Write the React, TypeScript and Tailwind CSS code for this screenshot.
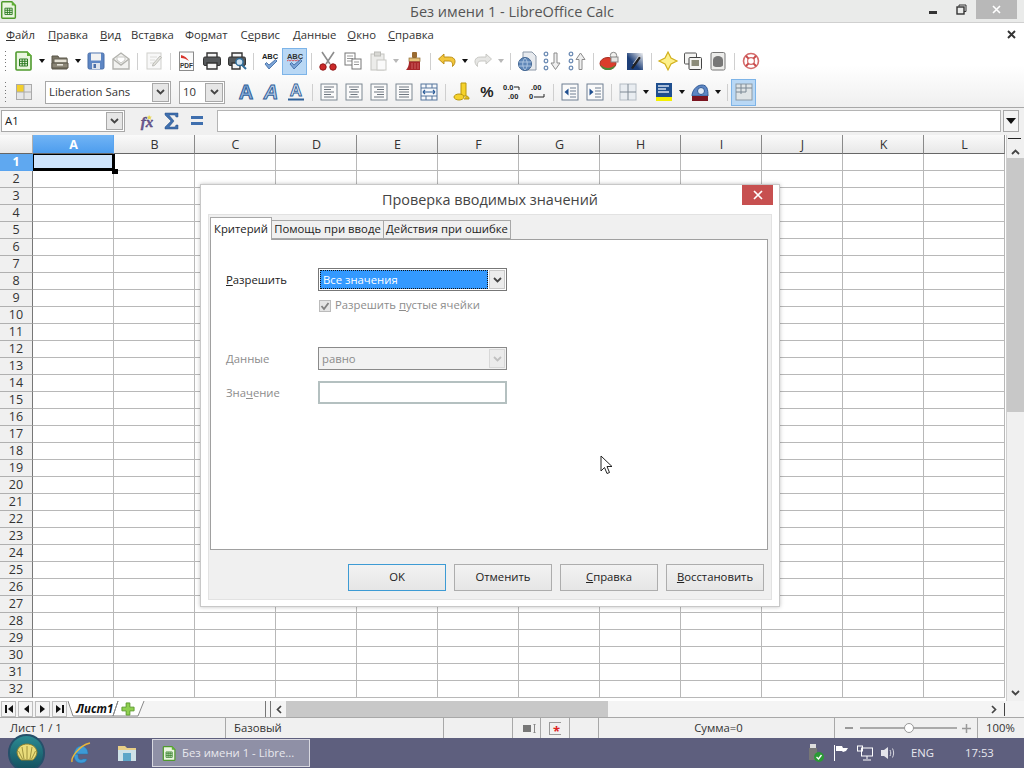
import { ReactNode } from "react";

const columns = ["A", "B", "C", "D", "E", "F", "G", "H", "I", "J", "K", "L"];
const rows = Array.from({ length: 32 }, (_, i) => i + 1);

const Svg = ({ children, size = 22, vb = 22 }: { children: ReactNode; size?: number; vb?: number }) => (
  <svg width={size} height={size} viewBox={`0 0 ${vb} ${vb}`} fill="none">
    {children}
  </svg>
);

const GreenDoc = ({ size = 22 }: { size?: number }) => (
  <Svg size={size}>
    <path d="M4 2h10l4 4v13a1 1 0 0 1-1 1H4a1 1 0 0 1-1-1V3a1 1 0 0 1 1-1z" fill="#eaf6df" stroke="#4f9a2d" strokeWidth="1.6" />
    <path d="M14 1l5 5h-5z" fill="#5fae36" />
    <path d="M6.5 9h8v7h-8z M6.5 11.3h8 M6.5 13.7h8 M9.2 9v7 M11.8 9v7" stroke="#2c7a22" strokeWidth="1" />
  </Svg>
);

const icons: Record<string, ReactNode> = {
  newdoc: <GreenDoc />,
  open: (
    <Svg>
      <path d="M3 6h6l1 2h8v11H3z" fill="#7b7667" stroke="#5a5648" />
      <path d="M5 9h13v4H5z" fill="#e6e3d6" stroke="#6b675a" />
      <path d="M3 13h16v5H3z" fill="#8b8676" stroke="#5a5648" />
      <path d="M8 14h6v1.6H8z" fill="#e8e6dc" />
    </Svg>
  ),
  save: (
    <Svg>
      <rect x="3" y="3" width="16" height="16" rx="1.5" fill="#5d86c4" stroke="#4a6ea8" />
      <rect x="6" y="3.5" width="10" height="7" fill="#f2f2f2" />
      <rect x="7" y="13" width="8" height="6" fill="#dde3ec" />
      <rect x="8.5" y="14" width="2.5" height="4" fill="#4a6ea8" />
    </Svg>
  ),
  mail: (
    <Svg>
      <path d="M3 9l8-6 8 6v10H3z" fill="#f2f2f0" stroke="#b3b3ae" strokeWidth="1.4" />
      <path d="M3 9l8 6 8-6" stroke="#b3b3ae" strokeWidth="1.4" />
      <path d="M7 7h8v3l-4 3-4-3z" fill="#fff" stroke="#c8c8c4" />
    </Svg>
  ),
  edit: (
    <Svg>
      <rect x="4" y="3" width="14" height="16" fill="#f8f8f8" stroke="#cfcfcc" />
      <path d="M7 7h7 M7 10h5 M7 13h4" stroke="#dcdcd9" />
      <path d="M10 14l7-8 1.5 1.5-7 8-2 .5z" fill="#e2e2dc" stroke="#bdbdb8" />
    </Svg>
  ),
  pdf: (
    <Svg>
      <rect x="3.5" y="2" width="14" height="18.5" fill="#fbfbfb" stroke="#8a8a8a" />
      <path d="M5 5c4 1 6 3 8 6-3-2-5-3-8-3z" fill="#d8342c" />
      <text x="10.5" y="18" textAnchor="middle" fontSize="6.5" fontWeight="700" fill="#333" fontFamily="Liberation Sans, sans-serif">PDF</text>
    </Svg>
  ),
  print: (
    <Svg>
      <path d="M6 3h10v5H6z" fill="#f5f5f5" stroke="#333" strokeWidth="1.4" />
      <rect x="2.5" y="7" width="17" height="8.5" rx="1.5" fill="#55585a" stroke="#333" />
      <path d="M6 13h10v6H6z" fill="#f5f5f5" stroke="#333" strokeWidth="1.4" />
    </Svg>
  ),
  preview: (
    <Svg>
      <path d="M6 3h10v5H6z" fill="#f5f5f5" stroke="#333" strokeWidth="1.4" />
      <rect x="2.5" y="7" width="17" height="8.5" rx="1.5" fill="#55585a" stroke="#333" />
      <path d="M6 13h8v6H6z" fill="#f5f5f5" stroke="#333" strokeWidth="1.4" />
      <circle cx="13.5" cy="12" r="3.6" fill="#cfe3f2" stroke="#2f6d9a" strokeWidth="1.5" />
      <path d="M16 15l4 4" stroke="#2f6d9a" strokeWidth="2" />
    </Svg>
  ),
  spell: (
    <Svg>
      <text x="11" y="9" textAnchor="middle" fontSize="7.5" fontWeight="700" fill="#222" fontFamily="Liberation Sans, sans-serif">ABC</text>
      <path d="M6 14l4 5 8-8-1.5-1.5L10 15l-2.5-2.5z" fill="#7ba3d6" stroke="#36659f" strokeWidth=".8" />
    </Svg>
  ),
  autospell: (
    <Svg>
      <text x="11" y="9" textAnchor="middle" fontSize="7.5" fontWeight="700" fill="#333" fontFamily="Liberation Sans, sans-serif">ABC</text>
      <path d="M3 11l1.5-1 1.5 1 1.5-1 1.5 1 1.5-1 1.5 1 1.5-1 1.5 1" stroke="#d33" strokeWidth=".8" />
      <path d="M6 14l4 5 8-8-1.5-1.5L10 15l-2.5-2.5z" fill="#7ba3d6" stroke="#36659f" strokeWidth=".8" />
    </Svg>
  ),
  cut: (
    <Svg>
      <path d="M5 2l8 12 M17 2L9 14" stroke="#8c8c8c" strokeWidth="1.6" />
      <circle cx="6" cy="17" r="3.2" fill="#cc2a2a" stroke="#8e1a1a" />
      <circle cx="16" cy="17" r="3.2" fill="#cc2a2a" stroke="#8e1a1a" />
    </Svg>
  ),
  copy: (
    <Svg>
      <rect x="3" y="3" width="10" height="12" fill="#fff" stroke="#777" />
      <path d="M5 6h6 M5 8.500h6 M5 11h6" stroke="#999" />
      <rect x="10" y="9" width="9" height="10" fill="#fff" stroke="#777" />
      <path d="M12 12h5 M12 14.500h5" stroke="#999" />
    </Svg>
  ),
  paste: (
    <Svg>
      <rect x="4" y="4" width="13" height="16" fill="#ececea" stroke="#c4c4c0" />
      <rect x="7.500" y="2" width="6" height="4" fill="#d8d8d4" stroke="#bcbcb8" />
      <rect x="10" y="10" width="9" height="10" fill="#fafafa" stroke="#c8c8c4" />
    </Svg>
  ),
  brush: (
    <Svg>
      <rect x="9" y="2" width="5" height="6" rx="1" fill="#9a6b32" />
      <rect x="6" y="8" width="11" height="3.500" fill="#e7c27a" stroke="#8a6a35" strokeWidth=".7" />
      <path d="M6 11.500h11V20H3c2-2 3-5 3-8.500z" fill="#a8272a" />
      <path d="M9 13v6 M12 13v6 M15 13v6" stroke="#d87070" strokeWidth=".8" />
    </Svg>
  ),
  undo: (
    <Svg>
      <path d="M8 4L2.500 9l5.500 5v-3h5c3 0 4 2 3.500 5.500C20.500 13 20 7 13.500 7H8z" fill="#f2c63b" stroke="#b88a10" strokeWidth=".9" />
    </Svg>
  ),
  redo: (
    <Svg>
      <path d="M14 4l5.500 5-5.500 5v-3H9c-3 0-4 2-3.500 5.500C1.500 13 2 7 8.500 7H14z" fill="#e6e6e4" stroke="#c4c4c0" strokeWidth=".9" />
    </Svg>
  ),
  nav: (
    <Svg>
      <path d="M7 2h9l4 4v14H7z" fill="#e7eaee" stroke="#8b98a8" />
      <circle cx="9" cy="14" r="6.500" fill="#5f87b8" stroke="#3f6492" />
      <path d="M3 12h12 M3 16h12 M9 8c-3 3-3 9 0 12 M9 8c3 3 3 9 0 12" stroke="#bcd0e8" strokeWidth=".8" />
    </Svg>
  ),
  sortdown: (
    <Svg>
      <circle cx="5" cy="4" r="1.800" stroke="#6e8db5" strokeWidth="1.300" />
      <circle cx="5" cy="11" r="1.800" stroke="#6e8db5" strokeWidth="1.300" />
      <circle cx="5" cy="18" r="1.800" stroke="#6e8db5" strokeWidth="1.300" />
      <path d="M13 3h3v10h3l-4.500 6.500L10 13h3z" fill="#efefef" stroke="#8c8c8c" />
    </Svg>
  ),
  sortup: (
    <Svg>
      <circle cx="5" cy="4" r="1.800" stroke="#6e8db5" strokeWidth="1.300" />
      <circle cx="5" cy="11" r="1.800" stroke="#6e8db5" strokeWidth="1.300" />
      <circle cx="5" cy="18" r="1.800" stroke="#6e8db5" strokeWidth="1.300" />
      <path d="M13 19.500h3v-10h3L14.500 3 10 9.500h3z" fill="#efefef" stroke="#8c8c8c" />
    </Svg>
  ),
  chart: (
    <Svg>
      <ellipse cx="9" cy="13.500" rx="8" ry="6" fill="#dc3d2c" stroke="#a82a1e" />
      <path d="M2 15c3 4 11 4 14 0 0 3-3 5-7 5s-7-2-7-5z" fill="#4a8a3a" />
      <circle cx="14.500" cy="5.500" r="3.200" fill="#f2f2f0" stroke="#888" />
      <rect x="12" y="7" width="7" height="5" fill="#e6e6e4" stroke="#888" />
    </Svg>
  ),
  draw: (
    <Svg>
      <defs>
        <linearGradient id="drawfill" x1="0" y1="1" x2="1" y2="0">
          <stop offset="0.4" stopColor="#1d3f78" />
          <stop offset="1" stopColor="#f4f4f4" />
        </linearGradient>
      </defs>
      <rect x="3" y="3" width="16" height="17" fill="url(#drawfill)" />
      <path d="M7 18l8-12 2 1.500-8 11.500z" fill="#222" />
      <path d="M9 14l6-8 2 1.500" stroke="#eee" strokeWidth=".7" />
    </Svg>
  ),
  star: (
    <Svg>
      <path d="M11 2l3 6 6 3-6 3-3 6-3-6-6-3 6-3z" fill="#fdf08a" stroke="#d2b01c" strokeWidth="1.200" />
    </Svg>
  ),
  gallery: (
    <Svg>
      <rect x="2.500" y="3" width="12" height="11" rx="1" fill="#f4f4f2" stroke="#555" />
      <rect x="7" y="7.500" width="12.500" height="12" rx="1" fill="#f4f4f2" stroke="#444" />
      <rect x="9.500" y="10" width="7.500" height="6" fill="#8b8b78" />
    </Svg>
  ),
  source: (
    <Svg>
      <rect x="4" y="2.500" width="14" height="17.500" rx="1.500" fill="#ededeb" stroke="#777" />
      <ellipse cx="11" cy="10" rx="5" ry="4" fill="#777" />
      <rect x="6" y="10" width="10" height="5" fill="#777" />
      <ellipse cx="11" cy="15" rx="5" ry="2" fill="#777" />
    </Svg>
  ),
  help: (
    <Svg>
      <circle cx="11" cy="11" r="7.500" fill="#fff" stroke="#d46a6a" strokeWidth="1.600" />
      <circle cx="11" cy="11" r="3.400" fill="#fff" stroke="#d46a6a" strokeWidth="1.200" />
      <path d="M6 6l2.600 2.600 M16 6l-2.600 2.600 M6 16l2.600-2.600 M16 16l-2.600-2.600" stroke="#c84a4a" strokeWidth="2" />
    </Svg>
  ),
  styles: (
    <Svg>
      <rect x="3.500" y="3.500" width="15" height="15" fill="#e6e6e6" stroke="#aaa" />
      <rect x="4" y="4" width="7" height="7" fill="#f3cf2b" />
      <path d="M11 3.500v15 M3.500 11h15" stroke="#aaa" />
    </Svg>
  ),
  bold: <Svg><text x="11" y="18" textAnchor="middle" fontSize="20" fontWeight="700" fill="#8db2de" stroke="#2f6099" strokeWidth="1" fontFamily="Liberation Sans, sans-serif">A</text></Svg>,
  italic: <Svg><text x="11" y="18" textAnchor="middle" fontSize="20" fontWeight="700" fontStyle="italic" fill="#b7cde8" stroke="#2f6099" strokeWidth="1" fontFamily="Liberation Sans, sans-serif">A</text></Svg>,
  underline: (
    <Svg>
      <text x="11" y="15" textAnchor="middle" fontSize="17" fontWeight="700" fill="#e3edf8" stroke="#2f6099" strokeWidth=".9" fontFamily="Liberation Sans, sans-serif">A</text>
      <path d="M3 18.500h16" stroke="#2f6099" strokeWidth="2" />
    </Svg>
  ),
  left: <Align d="M6 6h10 M6 8.500h7 M6 11h10 M6 13.500h7 M6 16h10" />,
  center: <Align d="M6 6h10 M7.500 8.500h7 M6 11h10 M7.500 13.500h7 M6 16h10" />,
  right: <Align d="M6 6h10 M9 8.500h7 M6 11h10 M9 13.500h7 M6 16h10" />,
  justify: <Align d="M6 6h10 M6 8.500h10 M6 11h10 M6 13.500h10 M6 16h10" />,
  wrap: (
    <Svg>
      <rect x="3" y="3" width="16" height="16" fill="#f6f8fb" stroke="#55759c" />
      <path d="M3 7h16 M3 15h16 M8 3v4 M14 3v4 M8 15v4 M14 15v4" stroke="#55759c" />
      <path d="M5 11h12 M5 11l2-2 M5 11l2 2 M17 11l-2-2 M17 11l-2 2" stroke="#2f5f9a" strokeWidth="1.200" />
    </Svg>
  ),
  money: (
    <Svg>
      <path d="M10 2h5v13H10z" fill="#f6d22c" stroke="#b8960d" />
      <ellipse cx="8" cy="16" rx="5" ry="3" fill="#f6d22c" stroke="#b8960d" />
      <path d="M15 15c2 0 3 1 3 3h-5" fill="#e0b71a" stroke="#b8960d" />
    </Svg>
  ),
  percent: <Svg><text x="11" y="16" textAnchor="middle" fontSize="15" fontWeight="700" fill="#222" fontFamily="Liberation Sans, sans-serif">%</text></Svg>,
  decimal: (
    <Svg>
      <text x="2" y="9" fontSize="7.500" fontWeight="700" fill="#222" fontFamily="Liberation Sans, sans-serif">0.0</text>
      <text x="7" y="18" fontSize="7.500" fontWeight="700" fill="#222" fontFamily="Liberation Sans, sans-serif">.00</text>
      <path d="M13 6h5v3" stroke="#222" />
    </Svg>
  ),
  decimal2: (
    <Svg>
      <text x="5" y="9" fontSize="7.500" fontWeight="700" fill="#222" fontFamily="Liberation Sans, sans-serif">.00</text>
      <text x="3" y="18" fontSize="7.500" fontWeight="700" fill="#222" fontFamily="Liberation Sans, sans-serif">0</text>
      <path d="M8 16h10v-3" stroke="#222" />
    </Svg>
  ),
  outdent: (
    <Svg>
      <rect x="3" y="3" width="16" height="16" fill="#fafafa" stroke="#6f7f92" />
      <path d="M5.500 11l4-3.500v7z" fill="#1f4f8f" />
      <path d="M11 7h6 M11 10h6 M11 13h6 M11 16h6" stroke="#6f7f92" />
    </Svg>
  ),
  indent: (
    <Svg>
      <rect x="3" y="3" width="16" height="16" fill="#fafafa" stroke="#6f7f92" />
      <path d="M9.500 11l-4-3.500v7z" fill="#1f4f8f" />
      <path d="M11 7h6 M11 10h6 M11 13h6 M11 16h6" stroke="#6f7f92" />
    </Svg>
  ),
  borders: (
    <Svg>
      <rect x="3" y="3" width="16" height="16" fill="#e9edf1" stroke="#b4bcc4" />
      <path d="M11 3v16 M3 11h16" stroke="#7f8994" />
    </Svg>
  ),
  highlight: (
    <Svg>
      <rect x="3" y="2" width="16" height="14" fill="#1f4f8f" />
      <path d="M5 5h11 M5 8h8 M5 11h11" stroke="#d6e2f2" strokeWidth="1.300" />
      <rect x="3" y="16" width="16" height="4" fill="#f4f000" />
    </Svg>
  ),
  background: (
    <Svg>
      <path d="M3 15c0-5 4-11 10-11 5 0 6 4 6 11z" fill="#5d86c4" stroke="#2f5a96" />
      <circle cx="12" cy="10" r="3.500" fill="#dfe8f4" stroke="#2f5a96" />
      <rect x="3" y="15" width="16" height="5" fill="#7a1420" />
    </Svg>
  ),
  grid: (
    <Svg>
      <rect x="3" y="3" width="16" height="16" fill="#dfe4e6" stroke="#8c9aa6" />
      <path d="M3 7h16 M3 11h10 M8 3v10 M13 3v8" stroke="#7a8894" />
    </Svg>
  ),
};

function Align({ d }: { d: string }) {
  return (
    <Svg>
      <rect x="3" y="3" width="16" height="16" fill="#fafafa" stroke="#7d8892" />
      <path d={d} stroke="#6e7780" />
    </Svg>
  );
}

const Chevron = ({ color = "#444" }: { color?: string }) => (
  <svg width="9" height="6" viewBox="0 0 9 6" fill="none">
    <path d="M1 1l3.500 3.500L8 1" stroke={color} strokeWidth="1.800" />
  </svg>
);

const Btn = ({ name, active }: { name: string; active?: boolean }) => (
  <div
    className={`flex h-[27px] w-[25px] shrink-0 items-center justify-center ${
      active ? "border border-[#7db4e8] bg-[#b9d8f5]" : ""
    }`}
  >
    {icons[name]}
  </div>
);

const Arrow = ({ faint }: { faint?: boolean }) => (
  <div className="flex h-[27px] w-[11px] shrink-0 items-center justify-center">
    <div
      className={`h-0 w-0 border-x-[3.5px] border-t-[4px] border-x-transparent ${
        faint ? "border-t-[#b8b8b8]" : "border-t-[#111]"
      }`}
    />
  </div>
);

const Sep = () => (
  <div className="flex h-[27px] w-[8px] shrink-0 items-center justify-center">
    <div className="h-[17px] w-px bg-[#cfcfcf]" />
  </div>
);

const Grip = () => (
  <div className="flex h-[20px] w-[10px] shrink-0 flex-col items-center justify-between pr-[5px] pl-[4px]">
    {[0, 1, 2, 3, 4, 5].map((i) => (
      <div key={i} className="h-px w-px bg-[#777]" />
    ))}
  </div>
);

const Combo = ({ text, width, arrow }: { text: string; width: string; arrow: string }) => (
  <div className={`flex h-[23px] shrink-0 items-center justify-between border border-[#a8a8a8] bg-white pr-px pl-[3px] text-[11.3px] text-[#333] ${width}`}>
    <span className="pt-px">{text}</span>
    <div className={`flex h-[19px] items-center justify-center border border-[#a8a8a8] bg-[#e6e6e6] ${arrow}`}>
      <Chevron />
    </div>
  </div>
);

const Menu = ({ pre = "", u, post, className = "" }: { pre?: string; u: string; post: string; className?: string }) => (
  <span className={className}>
    {pre}
    <u>{u}</u>
    {post}
  </span>
);

const DialogButton = ({ children, primary }: { children: ReactNode; primary?: boolean }) => (
  <div
    className={`flex h-[27px] w-[98px] items-center justify-center border bg-gradient-to-b from-[#f2f2f2] to-[#e6e6e6] text-[11.3px] text-[#222] ${
      primary ? "border-[#3d9bd4]" : "border-[#adadad]"
    }`}
  >
    {children}
  </div>
);

const Dialog = () => (
  <div className="absolute top-[184px] left-[200px] flex h-[423px] w-[580px] flex-col border border-[#c8c8c8] bg-white px-[7px] pb-[6px] shadow-[0_0_4px_rgba(0,0,0,0.25)]">
    <div className="relative flex h-[29px] shrink-0 items-center justify-center text-[14.4px] text-[#444]">
      Проверка вводимых значений
      <div className="absolute top-0 right-[-1px] flex h-[20px] w-[31px] items-center justify-center bg-[#c75050]">
        <svg width="10" height="10" viewBox="0 0 10 10">
          <path d="M1 1l8 8M9 1l-8 8" stroke="#fff" strokeWidth="1.700" />
        </svg>
      </div>
    </div>
    <div className="flex flex-1 flex-col border border-[#e2e2e2] bg-[#f0f0f0] pt-[2px] pr-[3px] pl-[1px]">
      <div className="flex h-[22px] items-end whitespace-nowrap text-[11.3px] text-[#222]">
        <div className="z-10 mb-[-1px] flex h-[23px] w-[62px] items-center justify-center border border-b-0 border-[#a8a8a8] bg-white">
          Критерий
        </div>
        <div className="flex h-[19px] w-[112px] items-center justify-center border-y border-r border-[#a8a8a8]">
          Помощь при вводе
        </div>
        <div className="flex h-[19px] w-[127px] items-center justify-center border-y border-r border-[#a8a8a8]">
          Действия при ошибке
        </div>
      </div>
      <div className="flex h-[311px] flex-col border border-[#a0a0a0] bg-white pt-[28px] pl-[15px] text-[11.3px]">
        <div className="flex h-[23px] items-center text-[#222]">
          <div className="w-[92px] pt-[2px]">
            <u>Р</u>азрешить
          </div>
          <div className="flex h-[23px] w-[189px] items-center border border-[#777] bg-white p-px">
            <div className="flex h-[19px] flex-1 items-center border border-dotted border-[#111] bg-[#3399ff] pt-px pl-[2px] text-white">
              Все значения
            </div>
            <div className="ml-[1px] flex h-[19px] w-[16px] items-center justify-center border border-[#c8c8c8] bg-[#ececec]">
              <Chevron />
            </div>
          </div>
        </div>
        <div className="mt-[8px] ml-[93px] flex h-[13px] items-center text-[#8c8c8c]">
          <div className="mr-[4px] flex h-[12px] w-[12px] items-center justify-center border border-[#bbb] bg-[#e4e4e4]">
            <svg width="10" height="10" viewBox="0 0 10 10" fill="none">
              <path d="M1.500 5l2.500 3 4.500-6" stroke="#808080" strokeWidth="1.800" />
            </svg>
          </div>
          <span>
            Разрешить <u>п</u>устые ячейки
          </span>
        </div>
        <div className="mt-[35px] flex h-[23px] items-center text-[#8c8c8c]">
          <div className="w-[92px] pt-[2px]">
            <u>Д</u>анные
          </div>
          <div className="flex h-[23px] w-[189px] items-center justify-between border border-[#8a8a8a] bg-[#f2f2f2] pr-px pl-[3px]">
            <span className="pt-px">равно</span>
            <div className="flex h-[19px] w-[16px] items-center justify-center border border-[#d8d8d8] bg-[#ececec]">
              <Chevron color="#c0c0c0" />
            </div>
          </div>
        </div>
        <div className="mt-[11px] flex h-[23px] items-center text-[#8c8c8c]">
          <div className="w-[92px] pt-[2px]">
            Зна<u>ч</u>ение
          </div>
          <div className="h-[23px] w-[189px] border-2 border-[#b4c0c0] bg-white" />
        </div>
      </div>
      <div className="mt-[14px] flex gap-[8px] pl-[138px]">
        <DialogButton primary>OK</DialogButton>
        <DialogButton>Отменить</DialogButton>
        <DialogButton>
          <span>
            <u>С</u>правка
          </span>
        </DialogButton>
        <DialogButton>
          <span>
            <u>В</u>осстановить
          </span>
        </DialogButton>
      </div>
    </div>
  </div>
);

const NavBtn = ({ d }: { d: string }) => (
  <div className="flex h-[16px] w-[15px] items-center justify-center border border-[#bdbdbd] bg-[#f4f4f4]">
    <svg width="10" height="10" viewBox="0 0 10 10">
      <path d={d} fill="#111" />
    </svg>
  </div>
);

const StatusCell = ({ className, children }: { className: string; children?: ReactNode }) => (
  <div className={`flex h-full shrink-0 items-center border-r border-[#a8a8a8] ${className}`}>{children}</div>
);

export default function App() {
  return (
    <div className="relative flex h-[768px] w-[1024px] flex-col overflow-hidden bg-white font-['Open_Sans',sans-serif] text-[#222]">
      {/* title bar */}
      <div className="relative flex h-[23px] shrink-0 items-center justify-center border-b border-[#d0d0d0] bg-[#eaebea] pt-px text-[14.5px] text-[#555]">
        <div className="absolute top-0 left-[-1px]">
          <GreenDoc size={20} />
        </div>
        Без имени 1 - LibreOffice Calc
        <div className="absolute top-0 right-[7px] flex h-[19px] items-start">
          <div className="mt-[11px] mr-[19px] h-[3px] w-[8px] bg-[#333]" />
          <svg className="mt-[4px] mr-[9px]" width="11" height="11" viewBox="0 0 11 11" fill="none">
            <path d="M3 2.500V1h7v6.500H8" stroke="#333" />
            <rect x="1" y="3" width="7" height="7" stroke="#333" strokeWidth="1.400" />
          </svg>
          <div className="flex h-[19px] w-[41px] items-center justify-center bg-[#b8b8b8]">
            <svg width="9" height="9" viewBox="0 0 9 9">
              <path d="M1 1l7 7M8 1L1 8" stroke="#fff" strokeWidth="1.600" />
            </svg>
          </div>
        </div>
      </div>

      {/* menu + toolbars */}
      <div className="shrink-0 bg-gradient-to-b from-white via-white to-[#efefef]">
        <div className="relative flex h-[24px] items-center gap-[12px] pl-[6px] text-[11.3px] text-[#333]">
          <Menu u="Ф" post="айл" />
          <Menu u="П" post="равка" className="ml-px" />
          <Menu u="В" post="ид" />
          <Menu pre="Вст" u="а" post="вка" className="ml-[-2px]" />
          <Menu pre="Фо" u="р" post="мат" className="ml-[-1px]" />
          <Menu pre="С" u="е" post="рвис" className="ml-px" />
          <Menu u="Д" post="анные" className="ml-px" />
          <Menu u="О" post="кно" className="ml-[-1px]" />
          <Menu u="С" post="правка" />
          <svg className="absolute top-[7px] right-[8px]" width="9" height="9" viewBox="0 0 9 9">
            <path d="M1 1l7 7M8 1L1 8" stroke="#333" strokeWidth="1.900" />
          </svg>
        </div>
        <div className="flex h-[30px] items-center pb-[2px] pl-[1px]">
          <Grip />
          <Btn name="newdoc" /><Arrow />
          <Btn name="open" /><Arrow />
          <Btn name="save" />
          <Btn name="mail" />
          <Sep />
          <Btn name="edit" />
          <Sep />
          <Btn name="pdf" />
          <Btn name="print" />
          <Btn name="preview" />
          <Sep />
          <Btn name="spell" />
          <Btn name="autospell" active />
          <Sep />
          <Btn name="cut" />
          <Btn name="copy" />
          <Btn name="paste" /><Arrow faint />
          <Btn name="brush" />
          <Sep />
          <Btn name="undo" /><Arrow />
          <Btn name="redo" /><Arrow faint />
          <Sep />
          <Btn name="nav" />
          <Btn name="sortdown" />
          <Btn name="sortup" />
          <Sep />
          <Btn name="chart" />
          <Btn name="draw" />
          <Sep />
          <Btn name="star" />
          <Btn name="gallery" />
          <Btn name="source" />
          <Sep />
          <Btn name="help" />
        </div>
        <div className="flex h-[31px] items-center border-b border-[#a8a8a8] pl-[1px]">
          <Grip />
          <Btn name="styles" />
          <div className="ml-[9px]">
            <Combo text="Liberation Sans" width="w-[126px]" arrow="w-[17px]" />
          </div>
          <div className="mr-[8px] ml-[8px]">
            <Combo text="10" width="w-[46px]" arrow="w-[18px]" />
          </div>
          <Btn name="bold" />
          <Btn name="italic" />
          <Btn name="underline" />
          <Sep />
          <Btn name="left" />
          <Btn name="center" />
          <Btn name="right" />
          <Btn name="justify" />
          <Btn name="wrap" />
          <Sep />
          <Btn name="money" />
          <Btn name="percent" />
          <Btn name="decimal" />
          <Btn name="decimal2" />
          <Sep />
          <Btn name="outdent" />
          <Btn name="indent" />
          <Sep />
          <Btn name="borders" /><Arrow />
          <Btn name="highlight" /><Arrow />
          <Btn name="background" /><Arrow />
          <Sep />
          <Btn name="grid" active />
        </div>
      </div>

      {/* formula bar */}
      <div className="flex h-[27px] shrink-0 items-center bg-[#f0f0f0] pt-[2px] pb-[3px] pl-px">
        <div className="flex h-[22px] w-[124px] items-center justify-between border border-[#a8a8a8] bg-white pr-px pl-[3px] text-[11.3px]">
          A1
          <div className="flex h-[18px] w-[17px] items-center justify-center border border-[#a8a8a8] bg-[#e6e6e6]">
            <Chevron />
          </div>
        </div>
        <div className="ml-[9px] flex w-[25px] justify-center">
          <svg width="20" height="20" viewBox="0 0 20 20">
            <text x="10" y="16" textAnchor="middle" fontSize="15" fontWeight="700" fontStyle="italic" fill="#6d5a92" stroke="#4a3a70" strokeWidth=".3" fontFamily="Liberation Serif, serif">fx</text>
            <path d="M12 4l1 1.500 2 .2-1.500 1 .5 2-2-1-1.500 1 .5-2-1.500-1 2-.2z" fill="#e8d44a" />
          </svg>
        </div>
        <div className="flex w-[25px] justify-center">
          <svg width="18" height="20" viewBox="0 0 18 20">
            <path d="M2 2h13v4h-2l-1-2H6l5 6-5 6h6l1-2h2v4H2v-2l6-6-6-6z" fill="#3f6fae" stroke="#2a5288" strokeWidth=".5" />
          </svg>
        </div>
        <div className="flex w-[25px] justify-center">
          <svg width="14" height="10" viewBox="0 0 14 10">
            <path d="M1 0h12v3H1zM1 6h12v3H1z" fill="#3f6fae" />
          </svg>
        </div>
        <div className="ml-[8px] h-[22px] w-[784px] border border-[#b4b4b4] bg-white" />
        <div className="ml-[2px] flex h-[22px] w-[16px] items-center justify-center border border-[#a8a8a8] bg-[#f4f4f4]">
          <div className="h-0 w-0 border-x-[5px] border-t-[6px] border-x-transparent border-t-[#111]" />
        </div>
      </div>

      {/* sheet */}
      <div className="relative flex h-[566px] shrink-0">
        <div className="w-[1006px] shrink-0">
          <div className="grid grid-cols-[33px_repeat(12,81px)]">
            <div className="h-[19px] border-r border-b border-r-[#b0b0b0] border-b-[#666] bg-gradient-to-b from-[#fafafa] to-[#e8e8e8]" />
            {columns.map((c) => (
              <div
                key={c}
                className={`flex h-[19px] items-center justify-center border-r border-b border-b-[#666] pt-[2px] pl-px text-[12.5px] leading-none ${
                  c === "A"
                    ? "border-r-[#5aa4ef] bg-gradient-to-b from-[#71b4f5] to-[#4d9dee] font-bold text-white"
                    : "border-r-[#8a8a8a] bg-gradient-to-b from-[#fafafa] to-[#e8e8e8] text-[#333]"
                }`}
              >
                {c}
              </div>
            ))}
            {rows.map((r) => (
              <div key={r} className="contents">
                <div
                  className={`flex h-[17px] items-center justify-center border-r border-b pt-px text-[12.5px] leading-none ${
                    r === 1
                      ? "border-[#5aa4ef] bg-[#5fa8f0] font-bold text-white"
                      : "border-r-[#777] border-b-[#b0b0b0] bg-[#f0f0f0] text-[#333]"
                  }`}
                >
                  {r}
                </div>
                {columns.map((c) => (
                  <div
                    key={c}
                    className={`h-[17px] border-r border-b border-[#b8b8b8] ${c === "A" && r === 1 ? "bg-[#cfe4fb]" : ""}`}
                  />
                ))}
              </div>
            ))}
          </div>
        </div>
        <div className="absolute top-[19px] left-[33px] h-[17px] w-[82px] border-t border-r-[3px] border-b-[3px] border-l border-black" />
        <div className="absolute top-[34px] left-[112px] h-[5px] w-[6px] bg-black" />
        <div className="flex flex-1 flex-col border-l border-[#cfcfcf] bg-[#f0f0f0]">
          <div className="relative h-[10px]">
            <div className="absolute top-[3px] left-[1px] h-px w-[13px] bg-[#222]" />
          </div>
          <div className="flex h-[13px] items-center justify-center">
            <svg width="9" height="6" viewBox="0 0 9 6" fill="none">
              <path d="M1 5l3.500-3.500L8 5" stroke="#444" strokeWidth="1.800" />
            </svg>
          </div>
          <div className="h-[254px] bg-[#c8c8c8]" />
          <div className="flex-1" />
          <div className="flex h-[16px] items-center justify-center">
            <Chevron />
          </div>
        </div>
      </div>

      {/* sheet tabs */}
      <div className="flex h-[17px] shrink-0 items-center border-b border-[#a8a8a8] bg-[#f4f4f4] pl-px">
        <div className="flex gap-[2px]">
          <NavBtn d="M1 1h2v8H1zM9 1v8L4 5z" />
          <NavBtn d="M8 1v8L3 5z" />
          <NavBtn d="M2 1v8l5-4z" />
          <NavBtn d="M1 1v8l5-4zM7 1h2v8H7z" />
        </div>
        <div className="relative flex h-[16px] w-[198px] items-center">
          <svg className="absolute inset-0" width="198" height="16" viewBox="0 0 198 16" fill="none">
            <path d="M1 0l5 15h40l5-15M51 0l-5 15h25l6-15" stroke="#888" fill="#fff" />
          </svg>
          <span className="relative ml-[9px] text-[11.5px] font-bold italic text-[#111]">Лист1</span>
          <svg className="relative ml-[8px]" width="14" height="14" viewBox="0 0 15 15">
            <path d="M5.500 1h4v4.500H14v4H9.500V14h-4V9.500H1v-4h4.500z" fill="#8fd050" stroke="#5a9a2a" />
          </svg>
        </div>
        <div className="h-[16px] w-[6px] border-x border-[#777] bg-[#f4f4f4]" />
        <div className="flex w-[15px] justify-center">
          <svg width="6" height="9" viewBox="0 0 6 9" fill="none">
            <path d="M5 1L1.500 4.500 5 8" stroke="#444" strokeWidth="1.700" />
          </svg>
        </div>
        <div className="h-[16px] w-[322px] bg-[#c8c8c8]" />
        <div className="flex flex-1 items-center justify-end gap-[7px] pr-[19px]">
          <svg width="6" height="9" viewBox="0 0 6 9" fill="none">
            <path d="M1 1l3.500 3.500L1 8" stroke="#444" strokeWidth="1.700" />
          </svg>
          <div className="h-[13px] w-px bg-[#444]" />
        </div>
      </div>

      {/* status bar */}
      <div className="flex h-[20px] shrink-0 items-center bg-[#f0f0f0] text-[11.3px] text-[#333]">
        <StatusCell className="w-[226px] pl-[10px]">Лист 1 / 1</StatusCell>
        <StatusCell className="w-[218px] pl-[8px]">Базовый</StatusCell>
        <StatusCell className="w-[69px]" />
        <StatusCell className="w-[28px] justify-center pl-[5px]">
          <svg width="13" height="9" viewBox="0 0 13 9">
            <rect x="0" y="1" width="8" height="7" fill="#777" />
            <path d="M10 0h3M11.500 0v9M10 9h3" stroke="#888" />
          </svg>
        </StatusCell>
        <StatusCell className="w-[29px] justify-center">
          <div className="flex h-[13px] w-[12px] justify-end overflow-visible border-y border-l border-[#999] pr-[1px] text-[13px] leading-[17px] font-bold text-[#d22]">
            *
          </div>
        </StatusCell>
        <StatusCell className="w-[29px]" />
        <StatusCell className="w-[236px] justify-center pl-[4px]">Сумма=0</StatusCell>
        <StatusCell className="w-[143px] pl-[10px]">
          <div className="h-[2px] w-[8px] bg-[#999]" />
          <div className="relative ml-[7px] h-[2px] w-[97px] bg-[#aaa]">
            <div className="absolute top-[-4px] left-[44px] h-[10px] w-[10px] rounded-full border border-[#999] bg-white" />
          </div>
          <svg className="ml-[5px]" width="9" height="9" viewBox="0 0 9 9">
            <path d="M4.500 0v9M0 4.500h9" stroke="#999" strokeWidth="1.500" />
          </svg>
        </StatusCell>
        <div className="pl-[8px]">100%</div>
      </div>

      {/* taskbar */}
      <div className="relative flex h-[30px] shrink-0 items-center bg-[#5e5f7e] text-[11.3px] text-[#e8e8ee]">
        <div className="absolute top-[-4px] left-[8px] flex h-[38px] w-[37px] items-center justify-center rounded-full border-2 border-[#25506a] bg-gradient-to-b from-[#2b8a92] to-[#14505f]">
          <svg width="24" height="22" viewBox="0 0 24 22" fill="none">
            <path d="M2 10C3 4 8 2 12 2s9 2 10 8c0 3-2 6-4 8H6c-2-2-4-5-4-8z" fill="#e9dc7a" stroke="#8b7f2e" />
            <path d="M12 4v13M7 5l2 12M17 5l-2 12M3.500 9l4 8M20.500 9l-4 8" stroke="#8b7f2e" strokeWidth=".8" />
          </svg>
        </div>
        <div className="ml-[70px] flex w-[22px] justify-center">
          <svg width="22" height="24" viewBox="0 0 22 24" fill="none">
            <path d="M5 13h13c0-5-3-8-7-8s-7 4-7 9 3 8 7 8c3 0 5-1 6-4h-4c-1 1-3 1-4 0-1-1-1-3-1-5z" fill="#3d9ad6" stroke="#2670a8" strokeWidth=".5" />
            <path d="M2 21C1 17 8 5 20 2" stroke="#e9b53a" strokeWidth="1.500" />
          </svg>
        </div>
        <div className="ml-[24px] flex w-[22px] justify-center">
          <svg width="20" height="20" viewBox="0 0 20 20">
            <path d="M1 3h7l2 2h9v13H1z" fill="#e8cf87" />
            <rect x="1" y="7" width="18" height="11" fill="#cfe2e8" />
            <rect x="6" y="10" width="8" height="8" fill="#5ea6c8" />
          </svg>
        </div>
        <div className="ml-[14px] flex h-[28px] w-[158px] items-center gap-[3px] border border-[#d8d8e0] bg-[#8f90a6] pl-[8px] whitespace-nowrap">
          <GreenDoc size={17} />
          <span className="ml-[1px]">Без имени 1 - Libre...</span>
        </div>
        <div className="ml-[497px] flex w-[18px] justify-center">
          <svg width="17" height="19" viewBox="0 0 17 19">
            <rect x="2" y="0" width="6" height="4" fill="#ddd" />
            <rect x="1" y="4" width="8" height="12" fill="#777" />
            <circle cx="11" cy="13" r="5" fill="#2a9a35" />
            <path d="M8.500 13l2 2 3-4" stroke="#fff" strokeWidth="1.300" fill="none" />
          </svg>
        </div>
        <div className="ml-[8px] flex w-[16px] justify-center">
          <svg width="16" height="16" viewBox="0 0 16 16" fill="none">
            <path d="M1.500 0v16" stroke="#fff" />
            <path d="M3 1h6l1 2h5l-2 3-3 1-1-1H3z" fill="#fff" />
          </svg>
        </div>
        <div className="ml-[8px] flex w-[16px] justify-center">
          <svg width="16" height="16" viewBox="0 0 16 16" fill="none" stroke="#fff">
            <rect x="0.500" y="1" width="5" height="5" />
            <rect x="4.500" y="3" width="11" height="8" />
            <path d="M10 11v3M6 15h8" />
          </svg>
        </div>
        <div className="ml-[7px] flex w-[16px] justify-center">
          <svg width="16" height="14" viewBox="0 0 16 14" fill="none">
            <path d="M1 4h3l4-3v12l-4-3H1z" fill="#e4e4ea" />
            <path d="M10 4c1 2 1 4 0 6M12.500 2.500c1.500 3 1.500 6 0 9" stroke="#d8d8e0" />
          </svg>
        </div>
        <span className="ml-[15px]">ENG</span>
        <span className="ml-[31px]">17:53</span>
      </div>

      <Dialog />

      {/* mouse pointer */}
      <svg className="absolute top-[455px] left-[600px]" width="13" height="20" viewBox="0 0 13 20">
        <path d="M1 1v15l3.500-3.500 2.500 6 2.500-1-2.500-6H12z" fill="#fff" stroke="#222" />
      </svg>
    </div>
  );
}
